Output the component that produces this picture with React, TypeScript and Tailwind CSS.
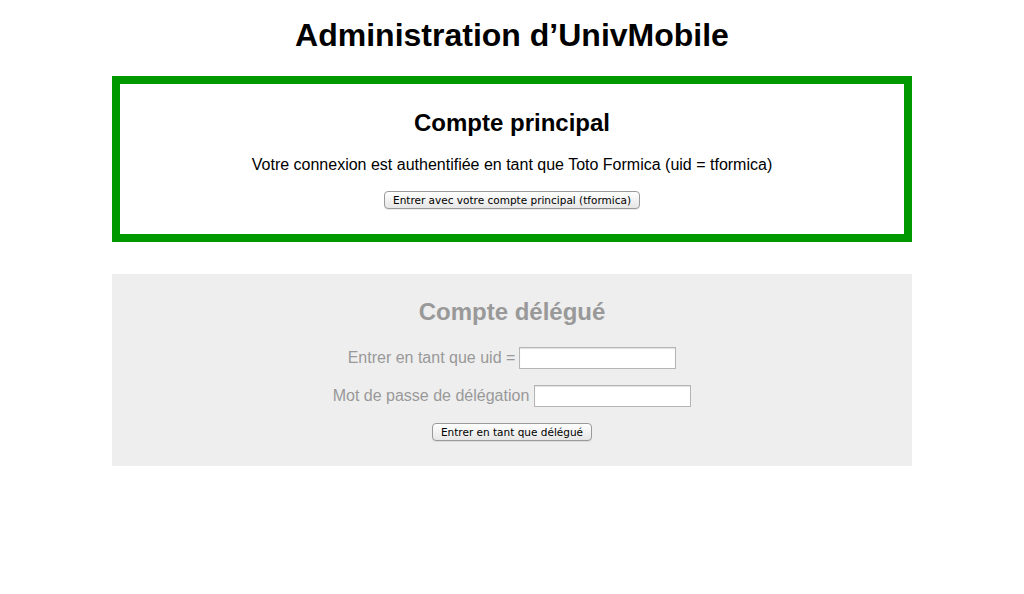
import React from "react";

const btn =
  "inline-flex items-center justify-center h-[18px] px-[8px] rounded-[4px] border border-[#9a9a9a] bg-gradient-to-b from-[#ffffff] to-[#e6e6e6] text-black text-[10.5px] leading-none shadow-[0_1px_0_rgba(0,0,0,0.08)] font-['DejaVu_Sans',sans-serif]";

export default function App() {
  return (
    <div className="min-h-[594px] bg-white font-['Liberation_Sans',Arial,sans-serif] pt-[16px]">
      <h1 className="text-center text-[32px] leading-[38px] font-bold text-black">
        Administration d’UnivMobile
      </h1>
      <div className="mt-[22px] w-[800px] mx-auto border-[8px] border-[#009900] pt-[25px] pb-[25px] flex flex-col items-center">
        <h2 className="text-[24px] leading-[28px] font-bold text-black">Compte principal</h2>
        <p className="mt-[18px] text-[16px] leading-[20px] text-black">
          Votre connexion est authentifiée en tant que Toto Formica (uid = tformica)
        </p>
        <button className={`mt-[16px] ${btn}`}>Entrer avec votre compte principal (tformica)</button>
      </div>
      <div className="mt-[32px] w-[800px] mx-auto bg-[#eeeeee] pt-[24px] pb-[25px] flex flex-col items-center">
        <h2 className="text-[24px] leading-[28px] font-bold text-[#999999]">Compte délégué</h2>
        <div className="mt-[21px] flex items-center gap-[4px] h-[22px]">
          <span className="text-[16px] leading-[20px] text-[#999999]">Entrer en tant que uid =</span>
          <input
            type="text"
            className="w-[157px] h-[22px] bg-white border border-[#b5b5b5] shadow-[inset_0_1px_1px_rgba(0,0,0,0.12)] outline-none"
          />
        </div>
        <div className="mt-[16px] flex items-center gap-[5px] h-[22px]">
          <span className="text-[16px] leading-[20px] text-[#999999]">Mot de passe de délégation</span>
          <input
            type="password"
            className="w-[157px] h-[22px] bg-white border border-[#b5b5b5] shadow-[inset_0_1px_1px_rgba(0,0,0,0.12)] outline-none"
          />
        </div>
        <button className={`mt-[16px] ${btn}`}>Entrer en tant que délégué</button>
      </div>
    </div>
  );
}
